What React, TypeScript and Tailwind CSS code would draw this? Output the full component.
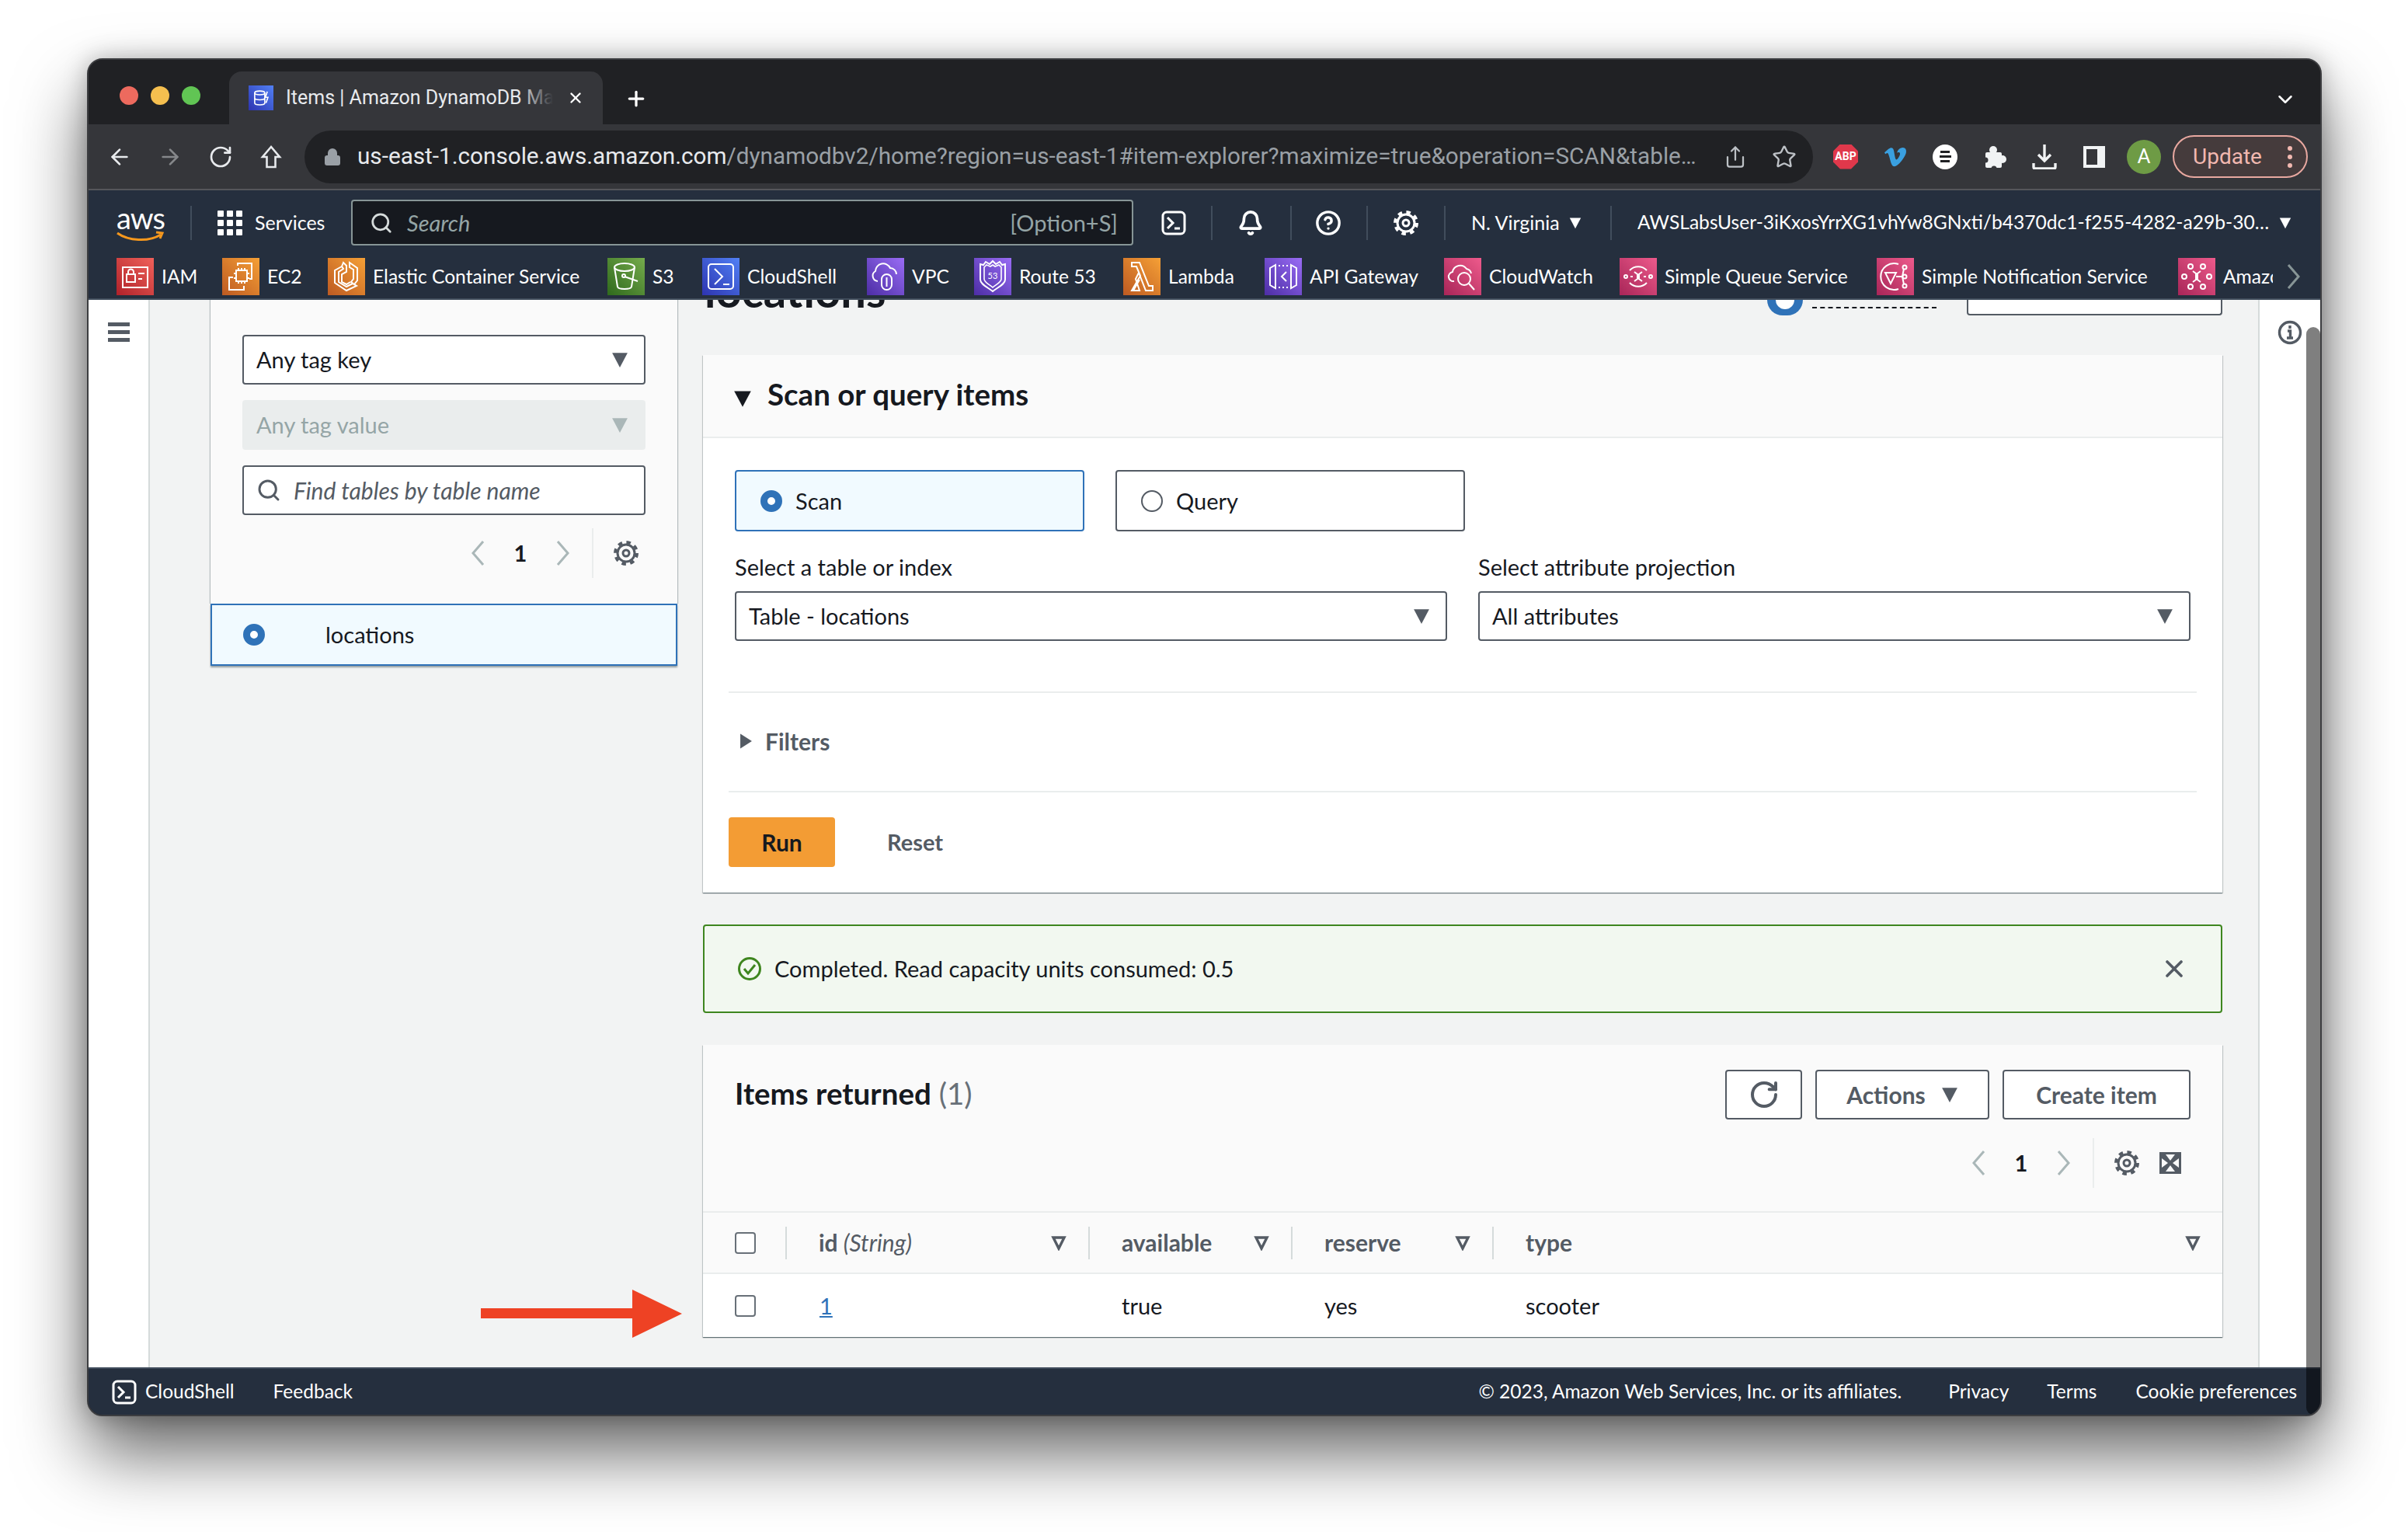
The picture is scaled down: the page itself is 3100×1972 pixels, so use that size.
import React from 'react';
import { ArrowLeft, ArrowRight, RotateCw, Lock, Share, Star, Search, Bell, CircleHelp, X, Plus, ChevronDown } from 'lucide-react';
import { FaVimeoV } from 'react-icons/fa';

const ember = "font-['Lato','Liberation_Sans',sans-serif]";
const chrome = "font-['Roboto','Liberation_Sans',sans-serif]";

// Small filled caret, used by selects and sort headers
const Caret = ({ className }: { className: string }) => (
  <svg viewBox="0 0 20 20" className={className}>
    <path d="M1 2h18L10 19z" fill="currentColor" />
  </svg>
);

const ShellIcon = ({ className }: { className: string }) => (
  <svg viewBox="0 0 32 32" className={className} fill="none" stroke="currentColor" strokeWidth="3">
    <rect x="2" y="2" width="28" height="28" rx="5" />
    <path d="M8 9l7 7-7 7M17 23h7" />
  </svg>
);

// AWS style gear, teeth come from a dashed ring
const Gear = ({ className }: { className: string }) => (
  <svg viewBox="0 0 34 34" className={className} fill="none" stroke="currentColor">
    <circle cx="17" cy="17" r="11" strokeWidth="3" />
    <circle cx="17" cy="17" r="4" strokeWidth="3" />
    <circle cx="17" cy="17" r="14" strokeWidth="4" strokeDasharray="5.5 5.5" />
  </svg>
);

const Chevron = ({ dir, className }: { dir: 'left' | 'right'; className: string }) => (
  <svg viewBox="0 0 20 32" className={className} fill="none" stroke="currentColor" strokeWidth="3">
    <path d={dir === 'left' ? 'M17 1L4 16l13 15' : 'M3 1l13 15L3 31'} />
  </svg>
);

const favIcons: Record<string, React.ReactNode> = {
  iam: (
    <>
      <rect x="8" y="12" width="32" height="26" />
      <rect x="13" y="21" width="11" height="10" />
      <path d="M15 21v-3a3.5 3.5 0 0 1 7 0v3M28 20h8M28 27h5" />
    </>
  ),
  ec2: (
    <>
      <rect x="18" y="16" width="14" height="14" />
      <path d="M21 16v-3M25 16v-3M29 16v-3M21 30v3M25 30v3M29 30v3M18 20h-3M18 26h-3M32 20h3M32 26h3" />
      <path d="M20 10V7h18v20h-3M28 36v5H9V25h5" />
    </>
  ),
  ecs: (
    <>
      <path d="M18 11L9 16v16l15 10 13-6-5-3-8 4-10-6V18l6-4zM28 6l10 7v16l-4 5-4-3 3-4V15l-5-3v-2z" />
      <path d="M18 11l2-5 4 4v8l-6 3v10l6 3 5-3" />
    </>
  ),
  s3: (
    <>
      <ellipse cx="22" cy="12" rx="13" ry="5" />
      <path d="M9 12l4 25c1 4 17 4 18 0l4-25" />
      <path d="M22 24l17 6" />
      <circle cx="21" cy="23" r="2" />
    </>
  ),
  shell: (
    <>
      <rect x="8" y="8" width="32" height="32" rx="4" />
      <path d="M16 14l10 10-10 10M27 34h8" />
    </>
  ),
  vpc: (
    <>
      <path d="M14 30a7 7 0 0 1-3-13 10 10 0 0 1 19-4 8 8 0 0 1 8 8" />
      <rect x="19" y="21" width="13" height="20" rx="6.5" />
      <path d="M25.500 25v12" />
    </>
  ),
  route: (
    <>
      <path d="M24 4l4 4 5-3 3 4 4-1v20c0 6-10 10-16 15-6-5-16-9-16-15V8l4 1 3-4 5 3z" />
      <path d="M24 9l3 2 5-2 3 3v15c0 5-7 7-11 11-4-4-11-6-11-11V12l3-3 5 2z" strokeWidth="1.6" />
      <text x="24" y="27" fontSize="11" textAnchor="middle" fill="#fff" stroke="none">53</text>
    </>
  ),
  lambda: <path d="M11 42l11-19-5-12h-6V6h10l12 30h5v6h-9L20 19 16 27l5 15zM13 42l8-14" />,
  api: (
    <>
      <path d="M14 9L7 13v22l7 4zM34 9l7 4v22l-7 4z" />
      <path d="M18 10h2M23 10h2M28 10h2M18 38h2M23 38h2M28 38h2M28 18l-6 6 6 6" />
    </>
  ),
  watch: (
    <>
      <path d="M13 30a6 6 0 0 1-2-12 10 10 0 0 1 18-4 8 8 0 0 1 6 6" />
      <circle cx="26" cy="27" r="8" />
      <path d="M32 33l7 8" />
    </>
  ),
  sqs: (
    <>
      <path d="M13 16a15 15 0 0 1 22 0M35 32a15 15 0 0 1-22 0" />
      <circle cx="8" cy="24" r="2" />
      <circle cx="40" cy="24" r="2" />
      <path d="M19 18l4 3v6l-4 3M29 18l-4 3v6l4 3M14 24h3M31 24h3" />
    </>
  ),
  sns: (
    <>
      <path d="M28 8a17 17 0 1 0 0 32" />
      <path d="M11 19h14l-7 14zM25 24h8" />
      <circle cx="36" cy="12" r="2.5" />
      <circle cx="36" cy="24" r="2.5" />
      <circle cx="36" cy="36" r="2.5" />
      <path d="M33 24l2-10M33 24l2 10" />
    </>
  ),
  amaz: (
    <>
      <circle cx="16" cy="11" r="3" />
      <circle cx="32" cy="11" r="3" />
      <circle cx="8" cy="24" r="3" />
      <circle cx="40" cy="24" r="3" />
      <circle cx="16" cy="37" r="3" />
      <circle cx="32" cy="37" r="3" />
      <path d="M19 17l4 3v8l-4 3M29 17l-4 3v8l4 3" />
    </>
  ),
};

const red = 'bg-linear-to-tr from-[#b0202a] to-[#f0605a]';
const orange = 'bg-linear-to-tr from-[#bd5a22] to-[#f5a036]';
const green = 'bg-linear-to-tr from-[#2f6a1c] to-[#75ab4c]';
const blue = 'bg-linear-to-tr from-[#2e33b0] to-[#5280f5]';
const purple = 'bg-linear-to-tr from-[#4d2da5] to-[#9a6cf5]';
const pink = 'bg-linear-to-tr from-[#a82558] to-[#ee5a8c]';

const favorites = [
  { icon: 'iam', label: 'IAM', color: red, w: 'w-[136px]' },
  { icon: 'ec2', label: 'EC2', color: orange, w: 'w-[136px]' },
  { icon: 'ecs', label: 'Elastic Container Service', color: orange, w: 'w-[360px]' },
  { icon: 's3', label: 'S3', color: green, w: 'w-[122px]' },
  { icon: 'shell', label: 'CloudShell', color: blue, w: 'w-[212px]' },
  { icon: 'vpc', label: 'VPC', color: purple, w: 'w-[138px]' },
  { icon: 'route', label: 'Route 53', color: purple, w: 'w-[192px]' },
  { icon: 'lambda', label: 'Lambda', color: orange, w: 'w-[182px]' },
  { icon: 'api', label: 'API Gateway', color: purple, w: 'w-[231px]' },
  { icon: 'watch', label: 'CloudWatch', color: pink, w: 'w-[226px]' },
  { icon: 'sqs', label: 'Simple Queue Service', color: pink, w: 'w-[331px]' },
  { icon: 'sns', label: 'Simple Notification Service', color: pink, w: 'w-[388px]' },
  { icon: 'amaz', label: 'Amazon', color: pink, w: 'w-[122px]' },
];

const Favorite = ({ item }: { item: (typeof favorites)[number] }) => (
  <div className={`flex items-center gap-[10px] shrink-0 overflow-hidden ${item.w}`}>
    <div className={`w-[48px] h-[48px] shrink-0 ${item.color}`}>
      <svg viewBox="0 0 48 48" className="w-full h-full" fill="none" stroke="#fff" strokeWidth="2">
        {favIcons[item.icon]}
      </svg>
    </div>
    <span className="text-[24.6px] text-white whitespace-nowrap">{item.label}</span>
  </div>
);

const NavDivider = () => <div className="w-[2px] h-[44px] bg-[#414d5c] shrink-0" />;

const Pager = ({ className }: { className: string }) => (
  <div className={`flex items-center ${className}`}>
    <Chevron dir="left" className="w-[20px] h-[32px] text-[#aab7b8]" />
    <span className="w-[90px] text-center text-[29px] font-bold text-[#16191f]">1</span>
    <Chevron dir="right" className="w-[20px] h-[32px] text-[#aab7b8]" />
    <div className="w-[2px] h-[64px] bg-[#eaeded] ml-[27px]" />
  </div>
);

const SelectBox = ({ label, className }: { label: string; className: string }) => (
  <div className={`h-[64px] rounded-[4px] border-2 border-[#545b64] bg-white flex items-center justify-between pl-[16px] pr-[20px] ${className}`}>
    <span className="text-[29px] text-[#16191f]">{label}</span>
    <Caret className="w-[22px] h-[22px] text-[#545b64]" />
  </div>
);

const columns = [
  { name: 'id', note: '(String)' },
  { name: 'available' },
  { name: 'reserve' },
  { name: 'type' },
];

const App: React.FC = () => {
  return (
    <div className={`w-[3100px] h-[1972px] overflow-hidden bg-white pl-[112px] pt-[75px] ${ember}`}>
      <div className="relative w-[2877px] h-[1748px] rounded-[20px] overflow-hidden flex flex-col bg-[#202124] shadow-[0_48px_90px_rgba(0,0,0,0.6),0_0_30px_rgba(0,0,0,0.25)] border-2 border-[#3c3d40]">
        {/* BROWSER TAB STRIP */}
        <div className={`h-[83px] shrink-0 bg-[#202124] flex items-end relative ${chrome}`}>
          <div className="flex items-center gap-[16px] pl-[40px] h-[68px] pb-[6px]">
            <span className="w-[24px] h-[24px] rounded-full bg-[#ed6a5e]" />
            <span className="w-[24px] h-[24px] rounded-full bg-[#f5bf4f]" />
            <span className="w-[24px] h-[24px] rounded-full bg-[#61c554]" />
          </div>
          <div className="ml-[37px] w-[481px] h-[68px] rounded-t-[16px] bg-[#35363a] flex items-center pl-[25px] pr-[24px]">
            <div className={`w-[32px] h-[32px] shrink-0 flex items-center justify-center ${blue}`}>
              <svg viewBox="0 0 32 32" className="w-[26px] h-[26px]" fill="none" stroke="#fff" strokeWidth="2">
                <ellipse cx="14" cy="8" rx="8" ry="3" />
                <path d="M6 8v16c0 4 16 4 16 0V8M6 16c0 4 16 4 16 0M26 6l-3 9h4l-3 9" />
              </svg>
            </div>
            <span className="relative ml-[16px] w-[344px] overflow-hidden whitespace-nowrap text-[25px] text-[#e8eaed]">
              Items | Amazon DynamoDB Ma
              <span className="absolute right-0 top-0 bottom-0 w-[44px] bg-linear-to-r from-transparent to-[#35363a]" />
            </span>
            <X className="w-[22px] h-[22px] text-white ml-auto" strokeWidth={2.6} />
          </div>
          <Plus className="w-[30px] h-[30px] text-white ml-[28px] mb-[18px]" strokeWidth={2.6} />
          <ChevronDown className="absolute right-[30px] top-[36px] w-[30px] h-[30px] text-white" strokeWidth={2} />
        </div>

        {/* BROWSER TOOLBAR */}
        <div className={`h-[85px] shrink-0 bg-[#35363a] flex items-center border-b-[2px] border-[#55565a] ${chrome}`}>
          <div className="flex items-center gap-[33px] pl-[24px]">
            <ArrowLeft className="w-[32px] h-[32px] text-[#e8eaed]" strokeWidth={2} />
            <ArrowRight className="w-[32px] h-[32px] text-[#85878a]" strokeWidth={2} />
            <RotateCw className="w-[32px] h-[32px] text-[#e8eaed]" strokeWidth={2} />
            <svg viewBox="0 0 32 32" className="w-[32px] h-[32px] text-[#e8eaed]" fill="none" stroke="currentColor" strokeWidth="2.6">
              <path d="M16 3L5 16h5.500v13h11V16H27z" />
            </svg>
          </div>
          <div className="ml-[27px] w-[1942px] h-[68px] rounded-full bg-[#202124] flex items-center pl-[24px] pr-[21px]">
            <Lock className="w-[24px] h-[24px] text-[#9aa0a6] shrink-0" fill="#9aa0a6" />
            <div className="ml-[20px] w-[1740px] whitespace-nowrap overflow-hidden text-[29.7px]">
              <span className="text-[#e8eaed]">us-east-1.console.aws.amazon.com</span>
              <span className="text-[#9aa0a6]">/dynamodbv2/home?region=us-east-1#item-explorer?maximize=true&amp;operation=SCAN&amp;table…</span>
            </div>
            <Share className="ml-auto w-[30px] h-[30px] text-[#bdc1c6]" strokeWidth={1.8} />
            <Star className="ml-[32px] w-[32px] h-[32px] text-[#bdc1c6]" strokeWidth={1.8} />
          </div>
          <div className="ml-[26px] flex items-center gap-[32px]">
            <div className="w-[32px] h-[32px] bg-[#e0384b] [clip-path:polygon(28%_0,72%_0,100%_28%,100%_72%,72%_100%,28%_100%,0_72%,0_28%)] flex items-center justify-center text-[14px] font-bold text-white">ABP</div>
            <FaVimeoV className="w-[32px] h-[32px] text-[#3aa0e0]" />
            <div className="w-[32px] h-[32px] rounded-full bg-white flex flex-col items-center justify-center gap-[3px]">
              <span className="w-[12px] h-[3px] bg-[#202124]" />
              <span className="w-[15px] h-[3px] bg-[#202124]" />
              <span className="w-[12px] h-[3px] bg-[#202124]" />
            </div>
            <svg viewBox="0 0 32 32" className="w-[32px] h-[32px] text-[#f1f3f4]" fill="currentColor">
              <rect x="4" y="10" width="21" height="20" rx="2" />
              <circle cx="14" cy="7" r="5" />
              <circle cx="26" cy="19" r="5" />
              <circle cx="4" cy="20" r="3.500" fill="#35363a" />
              <circle cx="15" cy="31" r="3.500" fill="#35363a" />
            </svg>
            <svg viewBox="0 0 32 32" className="w-[32px] h-[32px] text-[#f1f3f4]" fill="none" stroke="currentColor" strokeWidth="3.4">
              <path d="M16 0v20M8 13l8 8 8-8M2 24v5a2 2 0 0 0 2 2h24a2 2 0 0 0 2-2v-5" />
            </svg>
            <div className="w-[32px] flex justify-center">
              <div className="w-[28px] h-[28px] bg-[#35363a] border-[#f1f3f4] border-y-[4px] border-l-[4px] border-r-[10px]" />
            </div>
          </div>
          <div className="ml-[26px] w-[44px] h-[44px] rounded-full bg-[#6e9b45] flex items-center justify-center text-[26px] text-white">A</div>
          <div className="ml-[15px] w-[174px] h-[55px] rounded-full border-2 border-[#e8a8a0] bg-[#453b3c] flex items-center justify-between pl-[24px] pr-[18px] text-[28px] text-[#f2b8b0]">
            <span>Update</span>
            <span className="flex flex-col gap-[5px]">
              <span className="w-[6px] h-[6px] rounded-full bg-[#f2b8b0]" />
              <span className="w-[6px] h-[6px] rounded-full bg-[#f2b8b0]" />
              <span className="w-[6px] h-[6px] rounded-full bg-[#f2b8b0]" />
            </span>
          </div>
        </div>

        {/* AWS CONSOLE NAV */}
        <div className="h-[141px] shrink-0 bg-[#252f3e] text-white border-b-2 border-[#414d5c] flex flex-col">
          <div className="h-[87px] shrink-0 flex items-center pl-[36px] pb-[4px] text-[25px]">
            <div className="relative w-[62px] h-[48px] shrink-0">
              <span className="block text-[38px] leading-[34px] tracking-[-1px] text-white">aws</span>
              <svg viewBox="0 0 62 16" className="absolute left-0 bottom-[-2px] w-[62px] h-[16px]" fill="none" stroke="#f7981d" strokeWidth="3">
                <path d="M1 3c14 10 40 12 56 2M51 2l8 1-3 7" />
              </svg>
            </div>
            <div className="ml-[33px]"><NavDivider /></div>
            <div className="ml-[33px] w-[32px] grid grid-cols-3 gap-[4px] shrink-0">
              {Array.from({ length: 9 }).map((_, i) => <span key={i} className="h-[8px] bg-white rounded-[1px]" />)}
            </div>
            <span className="ml-[16px] w-[124px] shrink-0">Services</span>
            <div className="w-[1007px] h-[59px] shrink-0 rounded-[4px] border-2 border-[#879596] bg-[#16191f] flex items-center justify-between pl-[22px] pr-[18px] text-[#95a5a6] text-[29px]">
              <div className="flex items-center gap-[18px]">
                <Search className="w-[30px] h-[30px] text-[#d5dbdb]" strokeWidth={2.2} />
                <span className="italic">Search</span>
              </div>
              <span>[Option+S]</span>
            </div>
            <ShellIcon className="ml-[36px] w-[32px] h-[32px] text-white shrink-0" />
            <div className="ml-[32px]"><NavDivider /></div>
            <Bell className="ml-[32px] w-[34px] h-[34px] shrink-0" strokeWidth={2.6} />
            <div className="ml-[34px]"><NavDivider /></div>
            <CircleHelp className="ml-[30px] w-[34px] h-[34px] shrink-0" strokeWidth={2.4} />
            <div className="ml-[32px]"><NavDivider /></div>
            <Gear className="ml-[32px] w-[34px] h-[34px] shrink-0" />
            <div className="ml-[32px]"><NavDivider /></div>
            <span className="ml-[33px] w-[114px] shrink-0 whitespace-nowrap">N. Virginia</span>
            <Caret className="ml-[12px] w-[16px] h-[16px] shrink-0" />
            <div className="ml-[37px]"><NavDivider /></div>
            <span className="ml-[33px] w-[816px] shrink-0 whitespace-nowrap overflow-hidden text-[24.6px]">AWSLabsUser-3iKxosYrrXG1vhYw8GNxti/b4370dc1-f255-4282-a29b-30…</span>
            <Caret className="ml-[10px] w-[16px] h-[16px] shrink-0" />
          </div>
          <div className="flex-1 flex items-start pl-[36px] relative">
            {favorites.map((item) => <Favorite key={item.icon} item={item} />)}
            <div className="absolute right-[24px] top-[0px] h-[48px] flex items-center bg-[#252f3e] pl-[8px]">
              <Chevron dir="right" className="w-[20px] h-[34px] text-[#879596]" />
            </div>
          </div>
        </div>

        {/* PAGE BODY */}
        <div className="flex-1 min-h-0 flex bg-[#f2f3f3] overflow-hidden">
          <div className="w-[79px] shrink-0 bg-white border-r-2 border-[#d5dbdb] flex flex-col items-center gap-[5px] pt-[29px]">
            <span className="w-[28px] h-[5px] bg-[#545b64]" />
            <span className="w-[28px] h-[5px] bg-[#545b64]" />
            <span className="w-[28px] h-[5px] bg-[#545b64]" />
          </div>

          {/* TABLES PANEL */}
          <div className="w-[601px] ml-[78px] shrink-0 flex flex-col">
            <div className="h-[391px] bg-[#fafafa] px-[41px] pt-[45px] shadow-[1px_0_1px_rgba(0,28,36,0.25),-1px_0_1px_rgba(0,28,36,0.25)]">
              <SelectBox label="Any tag key" className="w-[519px]" />
              <div className="mt-[20px] w-[519px] h-[64px] rounded-[4px] bg-[#eaeded] flex items-center justify-between pl-[18px] pr-[22px]">
                <span className="text-[29px] text-[#95a5a6]">Any tag value</span>
                <Caret className="w-[22px] h-[22px] text-[#aab7b8]" />
              </div>
              <div className="mt-[20px] w-[519px] h-[64px] rounded-[4px] border-2 border-[#545b64] bg-white flex items-center pl-[16px] gap-[16px]">
                <Search className="w-[32px] h-[32px] text-[#545b64]" strokeWidth={2.2} />
                <span className="text-[30px] italic text-[#545b64]">Find tables by table name</span>
              </div>
              <div className="mt-[17px] flex items-center justify-end pr-[8px]">
                <Pager className="mr-[25px]" />
                <Gear className="w-[34px] h-[34px] text-[#545b64]" />
              </div>
            </div>
            <div className="h-[80px] border-2 border-[#2f72b8] bg-[#f1faff] flex items-center pl-[40px] shadow-[0_2px_2px_rgba(0,28,36,0.4)]">
              <span className="w-[28px] h-[28px] rounded-full border-[9px] border-[#2f72b8] bg-white shrink-0" />
              <span className="ml-[78px] text-[29px] text-[#16191f]">locations</span>
            </div>
          </div>

          {/* ITEM EXPLORER */}
          <div className="w-[1956px] ml-[33px] shrink-0 flex flex-col">
            <div className="h-[71px] shrink-0 overflow-hidden relative">
              <div className="absolute left-[2px] bottom-[54px] text-[58px] leading-none font-bold text-[#16191f]">locations</div>
              <div className="absolute left-[1370px] top-[0px] flex items-center gap-[12px]">
                <span className="w-[46px] h-[20px] rounded-b-full bg-[#2f72b8] flex justify-center"><span className="w-[24px] h-[12px] rounded-b-full bg-white" /></span>
                <span className="w-[160px] border-b-2 border-dashed border-[#16191f] h-[10px] mt-[-8px]" />
              </div>
              <div className="absolute right-0 top-0 w-[329px] h-[20px] rounded-b-[4px] border-2 border-t-0 border-[#545b64] bg-white" />
            </div>

            {/* SCAN CARD */}
            <div className="h-[692px] shrink-0 bg-white shadow-[0_1px_1px_rgba(0,28,36,0.4),1px_1px_1px_rgba(0,28,36,0.15),-1px_1px_1px_rgba(0,28,36,0.15)]">
              <div className="h-[107px] bg-[#fafafa] border-b-2 border-[#eaeded] flex items-center pl-[39px] pb-[4px]">
                <Caret className="w-[24px] h-[24px] text-[#16191f] mt-[10px]" />
                <span className="ml-[20px] text-[38.500px] font-bold text-[#16191f]">Scan or query items</span>
              </div>
              <div className="pl-[41px] pt-[41px] flex gap-[40px]">
                <div className="w-[450px] h-[79px] rounded-[4px] border-2 border-[#2f72b8] bg-[#f1faff] flex items-center pl-[31px] gap-[17px]">
                  <span className="w-[28px] h-[28px] rounded-full border-[9px] border-[#2f72b8] bg-white" />
                  <span className="text-[29px] text-[#16191f]">Scan</span>
                </div>
                <div className="w-[450px] h-[79px] rounded-[4px] border-2 border-[#545b64] bg-white flex items-center pl-[31px] gap-[17px]">
                  <span className="w-[28px] h-[28px] rounded-full border-2 border-[#545b64] bg-white" />
                  <span className="text-[29px] text-[#16191f]">Query</span>
                </div>
              </div>
              <div className="pl-[41px] pt-[29px] flex gap-[40px]">
                <div className="w-[917px]">
                  <div className="h-[34px] text-[29px] leading-[34px] text-[#16191f] mb-[14px]">Select a table or index</div>
                  <SelectBox label="Table - locations" className="w-full" />
                </div>
                <div className="w-[917px]">
                  <div className="h-[34px] text-[29px] leading-[34px] text-[#16191f] mb-[14px]">Select attribute projection</div>
                  <SelectBox label="All attributes" className="w-full" />
                </div>
              </div>
              <div className="mx-[33px] mt-[65px] h-[130px] border-y-2 border-[#eaeded] flex items-center pl-[14px] pb-[2px] gap-[16px]">
                <svg viewBox="0 0 16 20" className="w-[17px] h-[24px] text-[#545b64]"><path d="M1 1l14 9-14 9z" fill="currentColor" /></svg>
                <span className="text-[30px] font-bold text-[#545b64]">Filters</span>
              </div>
              <div className="ml-[33px] mt-[32px] flex items-center">
                <div className="w-[137px] h-[64px] rounded-[4px] bg-[#f39c34] flex items-center justify-center text-[30px] font-bold text-[#16191f]">Run</div>
                <span className="ml-[67px] text-[29px] font-bold text-[#545b64]">Reset</span>
              </div>
            </div>

            {/* FLASH MESSAGE */}
            <div className="mt-[41px] h-[114px] shrink-0 rounded-[4px] border-2 border-[#3f861f] bg-[#f2f8f0] flex items-center pl-[42px] pr-[42px]">
              <svg viewBox="0 0 32 32" className="w-[32px] h-[32px] shrink-0 text-[#3f861f]" fill="none" stroke="currentColor" strokeWidth="3">
                <circle cx="16" cy="16" r="13.5" />
                <path d="M9 16l5 6 9-11" />
              </svg>
              <span className="ml-[16px] text-[29px] text-[#16191f]">Completed. Read capacity units consumed: 0.5</span>
              <X className="ml-auto w-[36px] h-[36px] text-[#545b64]" strokeWidth={2.4} />
            </div>

            {/* ITEMS RETURNED */}
            <div className="mt-[41px] h-[376px] shrink-0 flex flex-col bg-white shadow-[0_1px_1px_rgba(0,28,36,0.45),1px_1px_1px_rgba(0,28,36,0.15),-1px_1px_1px_rgba(0,28,36,0.15)]">
              <div className="h-[216px] shrink-0 bg-[#fafafa] border-b-2 border-[#eaeded] pl-[41px] pr-[41px] pt-[32px]">
                <div className="flex items-start">
                  <div className="text-[38.500px] leading-[60px] text-[#16191f]">
                    <span className="font-bold">Items returned</span> <span className="text-[#687078]">(1)</span>
                  </div>
                  <div className="ml-auto flex gap-[17px]">
                    <div className="w-[99px] h-[64px] rounded-[4px] border-2 border-[#545b64] bg-white flex items-center justify-center">
                      <RotateCw className="w-[40px] h-[40px] text-[#545b64]" strokeWidth={2.4} />
                    </div>
                    <div className="w-[224px] h-[64px] rounded-[4px] border-2 border-[#545b64] bg-white flex items-center justify-center gap-[20px]">
                      <span className="text-[30px] font-bold text-[#545b64]">Actions</span>
                      <Caret className="w-[22px] h-[22px] text-[#545b64]" />
                    </div>
                    <div className="w-[242px] h-[64px] rounded-[4px] border-2 border-[#545b64] bg-white flex items-center justify-center text-[30px] font-bold text-[#545b64]">Create item</div>
                  </div>
                </div>
                <div className="mt-[24px] flex items-center justify-end pr-[12px]">
                  <Pager className="mr-[25px]" />
                  <Gear className="w-[34px] h-[34px] text-[#545b64]" />
                  <svg viewBox="0 0 28 28" className="ml-[25px] w-[28px] h-[28px] text-[#545b64]">
                    <path d="M0 0h28v28H0z" fill="currentColor" />
                    <path d="M8 3h12l-6 8zM8 25h12l-6-8zM3 8v12l8-6zM25 8v12l-8-6z" fill="#fafafa" />
                    <path d="M5 5l18 18M23 5L5 23" stroke="currentColor" strokeWidth="3" />
                  </svg>
                </div>
              </div>
              <div className="h-[79px] shrink-0 bg-[#fafafa] border-b-2 border-[#eaeded] grid grid-cols-[106px_390px_261px_259px_1fr] items-center">
                <div className="pl-[41px]"><div className="w-[27px] h-[28px] rounded-[4px] border-2 border-[#687078] bg-white" /></div>
                {columns.map((col) => (
                  <div key={col.name} className="h-[42px] border-l-2 border-[#d5dbdb] first:border-[#eaeded] pl-[41px] pr-[28px] flex items-center justify-between">
                    <span className="text-[30px] text-[#545b64]">
                      <span className="font-bold">{col.name}</span>
                      {col.note && <span className="italic"> {col.note}</span>}
                    </span>
                    <svg viewBox="0 0 20 20" className="w-[20px] h-[20px] text-[#545b64]" fill="none" stroke="currentColor" strokeWidth="3.4">
                      <path d="M3 3h14L10 17z" />
                    </svg>
                  </div>
                ))}
              </div>
              <div className="flex-1 grid grid-cols-[106px_390px_261px_259px_1fr] items-center text-[29px] text-[#16191f]">
                <div className="pl-[41px]"><div className="w-[27px] h-[28px] rounded-[4px] border-2 border-[#687078] bg-white" /></div>
                <div className="pl-[44px]"><span className="underline text-[#2f72b8]">1</span></div>
                <div className="pl-[43px]">true</div>
                <div className="pl-[43px]">yes</div>
                <div className="pl-[43px]">scooter</div>
              </div>
            </div>
          </div>

          {/* HELP PANEL */}
          <div className="ml-[46px] flex-1 bg-white border-l-2 border-[#d5dbdb] pl-[23px] pt-[26px]">
            <svg viewBox="0 0 32 32" className="w-[32px] h-[32px] text-[#545b64]" fill="none" stroke="currentColor" strokeWidth="3.4">
              <circle cx="16" cy="16" r="13.500" />
              <path d="M16 7v4M13 14h3.500v9M12 23h8" />
            </svg>
          </div>
        </div>

        {/* CONSOLE FOOTER */}
        <div className="h-[61px] shrink-0 bg-[#252f3e] border-t-2 border-[#414d5c] flex items-center pl-[30px] pr-[30px] text-[24.5px] text-white">
          <ShellIcon className="w-[32px] h-[32px]" />
          <span className="ml-[11px]">CloudShell</span>
          <span className="ml-[50px]">Feedback</span>
          <span className="ml-auto">© 2023, Amazon Web Services, Inc. or its affiliates.</span>
          <span className="ml-[60px]">Privacy</span>
          <span className="ml-[49px]">Terms</span>
          <span className="ml-[50px]">Cookie preferences</span>
        </div>

        {/* OVERLAY SCROLLBAR */}
        <div className="absolute right-0 top-[344px] bottom-0 w-[18px] rounded-full bg-black/50" />
      </div>

      {/* RED ANNOTATION ARROW */}
      <svg viewBox="0 0 259 62" className="absolute left-[619px] top-[1660px] w-[259px] h-[62px]">
        <path d="M0 24h195V0l64 31-64 31V37H0z" fill="#ee4224" />
      </svg>
    </div>
  );
};

export default App;
